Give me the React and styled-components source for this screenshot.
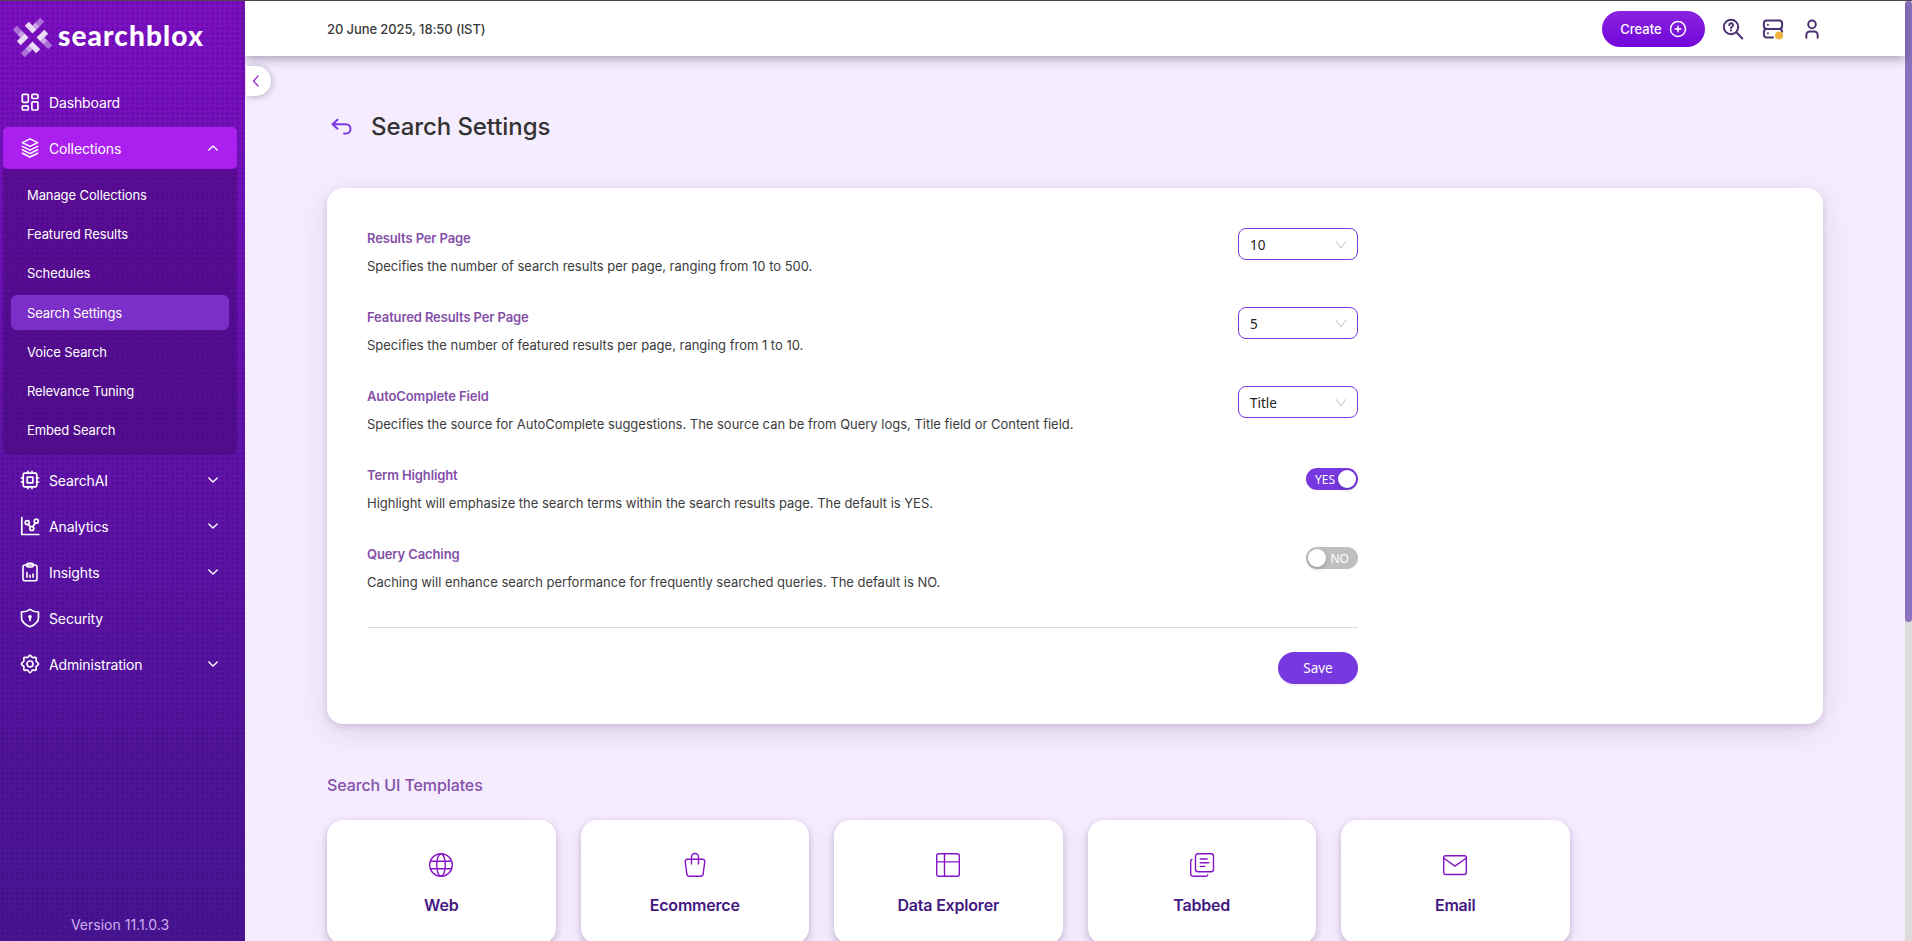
import React from "react";
import styled, { createGlobalStyle } from "styled-components";

const Global = createGlobalStyle`
  *, *::before, *::after { box-sizing: border-box; }
  html, body { margin: 0; height: 100%; overflow: hidden; }
  body { font-family: Inter, "Liberation Sans", sans-serif; color: #333; background: #f5ecfe; }
  button { font: inherit; border: 0; cursor: pointer; }
`;

const Shell = styled.div`
  display: flex;
  height: 941px;
  border-top: 1px solid #4a464c;
`;

const Sidebar = styled.aside`
  width: 245px;
  flex: none;
  display: flex;
  flex-direction: column;
  padding: 14px 8px 8px 3px;
  background-image:
    radial-gradient(circle at 50% 50%, rgba(50, 0, 120, 0.3) 0 1px, transparent 1.5px),
    linear-gradient(180deg, #7d10c2 0%, #6212aa 45%, #47158f 100%);
  background-size: 5px 5px, 100% 100%;
`;

const Brand = styled.div`
  display: flex;
  align-items: center;
  gap: 5px;
  height: 44px;
  padding-left: 9px;
  color: #fff;
  font: 900 28px "Lato", sans-serif;
  letter-spacing: 1.1px;
`;

const BrandName = styled.span`
  line-height: 30px;
  margin-top: -5px;
`;

const Nav = styled.nav`
  margin-top: 20px;
`;

const NavItem = styled.div`
  display: flex;
  align-items: center;
  height: ${(p) => (p.$open ? 42 : 46)}px;
  margin-top: ${(p) => (p.$open ? 2 : 0)}px;
  padding: 0 18px 0 17px;
  gap: 9px;
  border-radius: 5px;
  background: ${(p) => (p.$open ? "#aa20ee" : "transparent")};
  color: #fff;
  font-size: 14px;
  letter-spacing: -0.13px;
  & > span { flex: 1; }
`;

const SubNav = styled.div`
  height: 286px;
  margin-bottom: 2px;
  padding: 6px 8px;
  border-radius: 0 0 6px 6px;
  background: rgba(64, 8, 110, 0.48);
`;

const SubItem = styled.div`
  display: flex;
  align-items: center;
  height: ${(p) => (p.$active ? 35 : 39)}px;
  margin: ${(p) => (p.$active ? "3px 0 2px" : 0)};
  padding-left: 16px;
  border-radius: 6px;
  background: ${(p) => (p.$active ? "rgba(150, 72, 238, 0.6)" : "transparent")};
  color: #fff;
  font-size: 13px;
  letter-spacing: -0.1px;
`;

const Version = styled.div`
  margin-top: auto;
  text-align: center;
  font-size: 14px;
  line-height: 17px;
  color: #cfaef2;
`;

const Main = styled.main`
  position: relative;
  flex: 1;
  min-width: 0;
  display: flex;
  flex-direction: column;
`;

const Header = styled.header`
  display: flex;
  align-items: center;
  flex: none;
  height: 55px;
  padding: 0 81px 0 82px;
  background: #fff;
  box-shadow: 0 3px 10px rgba(60, 40, 80, 0.4);
`;

const Clock = styled.time`
  flex: 1;
  font-size: 13px;
  font-weight: 500;
  letter-spacing: -0.1px;
  color: #3c3c3c;
`;

const CreateButton = styled.button`
  display: flex;
  align-items: center;
  justify-content: center;
  gap: 7px;
  width: 103px;
  height: 36px;
  margin-right: 16px;
  border-radius: 18px;
  color: #fff;
  font-size: 13px;
  font-weight: 500;
  background: linear-gradient(180deg, #8a22e0, #7207da);
`;

const HeaderIcon = styled.span`
  display: flex;
  margin-right: ${(p) => p.$gap || 0}px;
`;

const CollapseTab = styled.button`
  position: absolute;
  left: 1px;
  top: 65px;
  width: 25px;
  height: 30px;
  padding: 0 0 0 4px;
  display: flex;
  align-items: center;
  border-radius: 0 15px 15px 0;
  background: #fff;
  box-shadow: 1px 1px 6px rgba(60, 40, 80, 0.3);
`;

const Content = styled.div`
  flex: 1;
  min-height: 0;
  overflow: hidden;
  padding: 54px 82px 0;
`;

const TitleRow = styled.div`
  display: flex;
  align-items: center;
  height: 34px;
  padding-left: 4px;
  gap: 18px;
`;

const Title = styled.h1`
  margin: -1px 0 0;
  font-size: 24px;
  font-weight: 500;
  letter-spacing: -0.08px;
  color: #333;
`;

const Card = styled.section`
  height: 536px;
  margin-top: 44px;
  padding: 40px;
  border-radius: 16px;
  background: #fff;
  box-shadow: 0 3px 6px rgba(60, 40, 90, 0.15), 0 8px 30px rgba(80, 40, 110, 0.12);
`;

const Form = styled.div`
  width: 991px;
`;

const Row = styled.div`
  display: flex;
  justify-content: space-between;
  height: 79px;
`;

const RowLabel = styled.div`
  font-size: 13px;
  font-weight: 600;
  line-height: 20px;
  letter-spacing: -0.12px;
  color: #8450a8;
`;

const RowText = styled.div`
  margin-top: 8px;
  font-size: 13px;
  line-height: 20px;
  letter-spacing: -0.015px;
  color: #3c3c3c;
`;

const Select = styled.div`
  display: flex;
  align-items: center;
  justify-content: space-between;
  width: 120px;
  height: 32px;
  padding: 1px 10px 0 11px;
  border: 1px solid #7838e0;
  border-radius: 8px;
  font: 13.5px "Noto Sans", sans-serif;
  color: #222;
`;

const Switch = styled.div`
  display: flex;
  align-items: center;
  flex-direction: ${(p) => (p.$on ? "row" : "row-reverse")};
  justify-content: space-between;
  width: 52px;
  height: 22px;
  margin-top: 3px;
  padding: ${(p) => (p.$on ? "0 2px 0 9px" : "0 9px 0 2px")};
  border-radius: 11px;
  background: ${(p) => (p.$on ? "#7838e0" : "#bfbfbf")};
  color: #fff;
  font: 12px "Noto Sans", sans-serif;
  i {
    width: 18px;
    height: 18px;
    border-radius: 50%;
    background: #fff;
    box-shadow: 0 2px 4px rgba(0, 35, 11, 0.2);
  }
`;

const Footer = styled.div`
  display: flex;
  justify-content: flex-end;
  margin-top: 4px;
  padding-top: 24px;
  border-top: 1px solid #dcdcdc;
`;

const SaveButton = styled.button`
  width: 80px;
  height: 32px;
  border-radius: 16px;
  background: #7838e0;
  color: #fff;
  font: 13.5px "Noto Sans", sans-serif;
  box-shadow: 0 2px 0 rgba(150, 60, 220, 0.08);
`;

const SectionTitle = styled.h2`
  margin: 50px 0 0;
  font-size: 16px;
  font-weight: 500;
  line-height: 22px;
  letter-spacing: -0.1px;
  color: #8450a8;
`;

const Templates = styled.div`
  display: grid;
  grid-template-columns: repeat(5, 228.5px);
  gap: 25px;
  margin-top: 24px;
`;

const Template = styled.div`
  display: flex;
  flex-direction: column;
  align-items: center;
  height: 124px;
  padding-top: 32px;
  gap: 17px;
  border-radius: 16px;
  background: #fff;
  box-shadow: 0 3px 6px rgba(60, 40, 90, 0.25), 0 5px 20px rgba(80, 40, 110, 0.08);
  font-size: 16px;
  font-weight: 600;
  letter-spacing: -0.2px;
  color: #43187f;
`;

const Track = styled.div`
  width: 7px;
  flex: none;
  background: #dcdcdc;
`;

const Thumb = styled.div`
  height: 621px;
  border-radius: 4px;
  background: #8b72be;
`;

function Icon({ size = 20, box = 24, w = 1.5, color = "currentColor", children }) {
  return (
    <svg width={size} height={size} viewBox={`0 0 ${box} ${box}`} fill="none" stroke={color}
      strokeWidth={w} strokeLinecap="round" strokeLinejoin="round">
      {children}
    </svg>
  );
}

const Logo = () => (
  <svg width="41" height="41" viewBox="0 0 41 41" fill="none" strokeWidth="5.6">
    {[0, 90, 180, 270].map((a) => (
      <g key={a} transform={`rotate(${a} 20.5 20.5)`}>
        <path d="M14.8 6.8 22.5 14.5" stroke="#fff" strokeOpacity=".85" />
        <path d="M22.5 10.5 25.5 7.5" stroke="#fff" strokeOpacity=".62" />
        <path d="M25.5 7.5 30.2 2.8" stroke="#fff" strokeOpacity=".4" />
      </g>
    ))}
  </svg>
);

const navIcons = {
  dashboard: (
    <Icon box={20} w={1.7}>
      <rect x="2.3" y="2.3" width="6" height="8" rx="1" /><rect x="11.9" y="2.3" width="6" height="4.2" rx="1" />
      <rect x="2.3" y="13.8" width="6" height="4.2" rx="1" /><rect x="11.9" y="9.9" width="6" height="8.1" rx="1" />
    </Icon>
  ),
  layers: (
    <Icon box={20} w={1.6}>
      <path d="M10 .9 17.6 4.6 10 8.4 2.4 4.6Z" /><path d="M2.4 8.4 10 12.1l7.6-3.7M2.4 11.8 10 15.6l7.6-3.8M2.4 15.2 10 19l7.6-3.8" />
    </Icon>
  ),
  chip: (
    <Icon box={20} w={1.7}>
      <rect x="3.2" y="3.2" width="13.6" height="13.6" rx="1.5" /><rect x="7.2" y="7.2" width="5.6" height="5.6" />
      <path d="M8 1.4v1.4M12 1.4v1.4M8 17.2v1.4M12 17.2v1.4M1.4 8h1.4M1.4 12h1.4M17.2 8h1.4M17.2 12h1.4" />
    </Icon>
  ),
  chart: (
    <Icon box={20} w={1.7}>
      <path d="M1.8 1.5v17h17" /><circle cx="7.2" cy="6.6" r="2" /><circle cx="16.3" cy="5.2" r="2" /><circle cx="11.8" cy="12.5" r="2" />
      <path d="m8.2 8.5 2.4 2.2M15.2 7l-2.4 3.8" />
    </Icon>
  ),
  clipboard: (
    <Icon box={20} w={1.6}>
      <rect x="3" y="3" width="14" height="15.8" rx="2" /><rect x="6.6" y="1.2" width="6.8" height="3.8" rx="1.9" />
      <path d="M7 10.5v4.7M10 13.2v2M13 12v3.2" />
    </Icon>
  ),
  shield: (
    <Icon box={20} w={1.7}>
      <path d="M10 1.3c2.6 2 5.4 2.7 8.5 2.7v5.6c0 4.4-3.8 7.4-8.5 9.2-4.7-1.8-8.5-4.8-8.5-9.2V4c3.1 0 5.9-.7 8.5-2.7Z" />
      <circle cx="10" cy="8.8" r="1" fill="currentColor" /><path d="M10 9v3.4" />
    </Icon>
  ),
  gear: (
    <Icon box={20} w={1.7}>
      <path d="M10 1.400c1.200 0 1.500 1.700 2.600 2.100s2.500-.8 3.400.1-.3 2.300.1 3.400 2.500 1.800 2.500 3-2 1.500-2.500 2.600.8 2.500-.1 3.400-2.300-.3-3.400.1-1.400 2.500-2.600 2.500-1.500-2-2.600-2.500-2.500.8-3.400-.1.300-2.300-.1-3.400S1.400 11.200 1.400 10s2-1.900 2.500-3-.8-2.500.1-3.400 2.300.3 3.400-.1S8.800 1.400 10 1.400Z" />
      <circle cx="10" cy="10" r="3" />
    </Icon>
  ),
};

const Chevron = ({ up }) => (
  <Icon size={12} box={12} w={1.4}>
    <path d={up ? "M1.8 8 6 4l4.2 4" : "M1.8 4 6 8l4.2-4"} />
  </Icon>
);

const Item = ({ icon, label, open, arrow }) => (
  <NavItem $open={open}>
    {navIcons[icon]}
    <span>{label}</span>
    {(open || arrow) && <Chevron up={open} />}
  </NavItem>
);

const subItems = ["Manage Collections", "Featured Results", "Schedules", "Search Settings", "Voice Search", "Relevance Tuning", "Embed Search"];

const settings = [
  { label: "Results Per Page", text: "Specifies the number of search results per page, ranging from 10 to 500.", value: "10" },
  { label: "Featured Results Per Page", text: "Specifies the number of featured results per page, ranging from 1 to 10.", value: "5" },
  { label: "AutoComplete Field", text: "Specifies the source for AutoComplete suggestions. The source can be from Query logs, Title field or Content field.", value: "Title" },
  { label: "Term Highlight", text: "Highlight will emphasize the search terms within the search results page. The default is YES.", on: true },
  { label: "Query Caching", text: "Caching will enhance search performance for frequently searched queries. The default is NO.", on: false },
];

const templates = [
  ["Web", <><circle cx="13" cy="13" r="11.3" /><ellipse cx="13" cy="13" rx="4.3" ry="11.3" /><path d="M2.5 9.3h21M2.5 16.7h21" /></>],
  ["Ecommerce", <><path d="M3.2 9.500a2 2 0 0 1 2-2.200h15.600a2 2 0 0 1 2 2.200l-1.700 12.600a2.600 2.600 0 0 1-2.500 2.200H7.400a2.600 2.600 0 0 1-2.500-2.200Z" /><path d="M9.500 12V5a3.500 3.500 0 0 1 7 0v7" /></>],
  ["Data Explorer", <><rect x="1.7" y="1.7" width="22.6" height="22.6" rx="2" /><path d="M9.5 1.7v22.6M1.7 9.9h22.6" /></>],
  ["Tabbed", <><rect x="6.5" y="1.7" width="18" height="18" rx="2.5" /><path d="M3 7.500c-1 .2-1.300 1-1.300 2v12.300a2.500 2.500 0 0 0 2.500 2.500h12.500c1 0 1.800-.5 2-1.500M11.200 7h7M11.200 10.700h8.600M11.200 14.400h4.500" /></>],
  ["Email", <><rect x="1.7" y="3.8" width="22.6" height="18.7" rx="2" /><path d="m2.300 6.500 10.700 7.600 10.700-7.600" /></>],
];

export default function App() {
  return (
    <>
      <Global />
      <Shell>
        <Sidebar>
          <Brand><Logo /><BrandName>searchblox</BrandName></Brand>
          <Nav>
            <Item icon="dashboard" label="Dashboard" />
            <Item icon="layers" label="Collections" open />
            <SubNav>
              {subItems.map((s) => <SubItem key={s} $active={s === "Search Settings"}>{s}</SubItem>)}
            </SubNav>
            <Item icon="chip" label="SearchAI" arrow />
            <Item icon="chart" label="Analytics" arrow />
            <Item icon="clipboard" label="Insights" arrow />
            <Item icon="shield" label="Security" />
            <Item icon="gear" label="Administration" arrow />
          </Nav>
          <Version>Version 11.1.0.3</Version>
        </Sidebar>
        <Main>
          <Header>
            <Clock>20 June 2025, 18:50 (IST)</Clock>
            <CreateButton>
              Create
              <Icon size={18} box={18} w={1.5}><circle cx="9" cy="9" r="7.5" /><path d="M9 6.2v5.6M6.2 9h5.6" /></Icon>
            </CreateButton>
            <HeaderIcon $gap={16}>
              <Icon size={24} w={2} color="#4b3272">
                <circle cx="10" cy="10" r="7.2" /><path d="m15.5 15.5 5.8 6" /><path d="M8.300 8.200a1.900 1.900 0 1 1 2.700 1.700c-.7.300-1 .6-1 1.200M10 13.300v.1" />
              </Icon>
            </HeaderIcon>
            <HeaderIcon $gap={15}>
              <Icon size={24} w={2} color="#4b3272">
                <rect x="2.9" y="3.6" width="18.2" height="8.3" rx="2.8" /><path d="M12 20.500H5.700a2.800 2.800 0 0 1-2.800-2.800v-3a2.800 2.800 0 0 1 2.800-2.800h12.600a2.800 2.800 0 0 1 2.800 2.800M6.900 7.700v.1M6.900 16.200v.1" />
                <circle cx="18" cy="18.5" r="4" fill="#efb43f" stroke="none" />
              </Icon>
            </HeaderIcon>
            <HeaderIcon>
              <Icon size={24} w={2} color="#4b3272">
                <circle cx="12" cy="7.4" r="3.8" /><path d="M6.300 20.700V18a3.600 3.600 0 0 1 3.600-3.600h4.200a3.600 3.600 0 0 1 3.600 3.600v2.700" />
              </Icon>
            </HeaderIcon>
          </Header>
          <CollapseTab><Icon size={12} box={12} w={1.4} color="#9a35d8"><path d="M8 1 3.5 6 8 11" /></Icon></CollapseTab>
          <Content>
            <TitleRow>
              <Icon size={22} box={22} w={2} color="#7838e0"><path d="M6.500 3.700 1.500 8.200l5 4.500M1.500 8.200h13.300a4.700 4.700 0 0 1 0 9.400h-1.800" /></Icon>
              <Title>Search Settings</Title>
            </TitleRow>
            <Card>
              <Form>
                {settings.map((s) => (
                  <Row key={s.label}>
                    <div>
                      <RowLabel>{s.label}</RowLabel>
                      <RowText>{s.text}</RowText>
                    </div>
                    {s.value ? (
                      <Select>{s.value}<Icon size={12} box={12} w={1} color="#bfbfbf"><path d="M1.3 2.5 6 9l4.700-6.500" /></Icon></Select>
                    ) : (
                      <Switch $on={s.on}><span>{s.on ? "YES" : "NO"}</span><i /></Switch>
                    )}
                  </Row>
                ))}
                <Footer><SaveButton>Save</SaveButton></Footer>
              </Form>
            </Card>
            <SectionTitle>Search UI Templates</SectionTitle>
            <Templates>
              {templates.map(([name, art]) => (
                <Template key={name}><Icon size={26} box={26} w={1.4} color="#8614c6">{art}</Icon>{name}</Template>
              ))}
            </Templates>
          </Content>
        </Main>
        <Track><Thumb /></Track>
      </Shell>
    </>
  );
}
